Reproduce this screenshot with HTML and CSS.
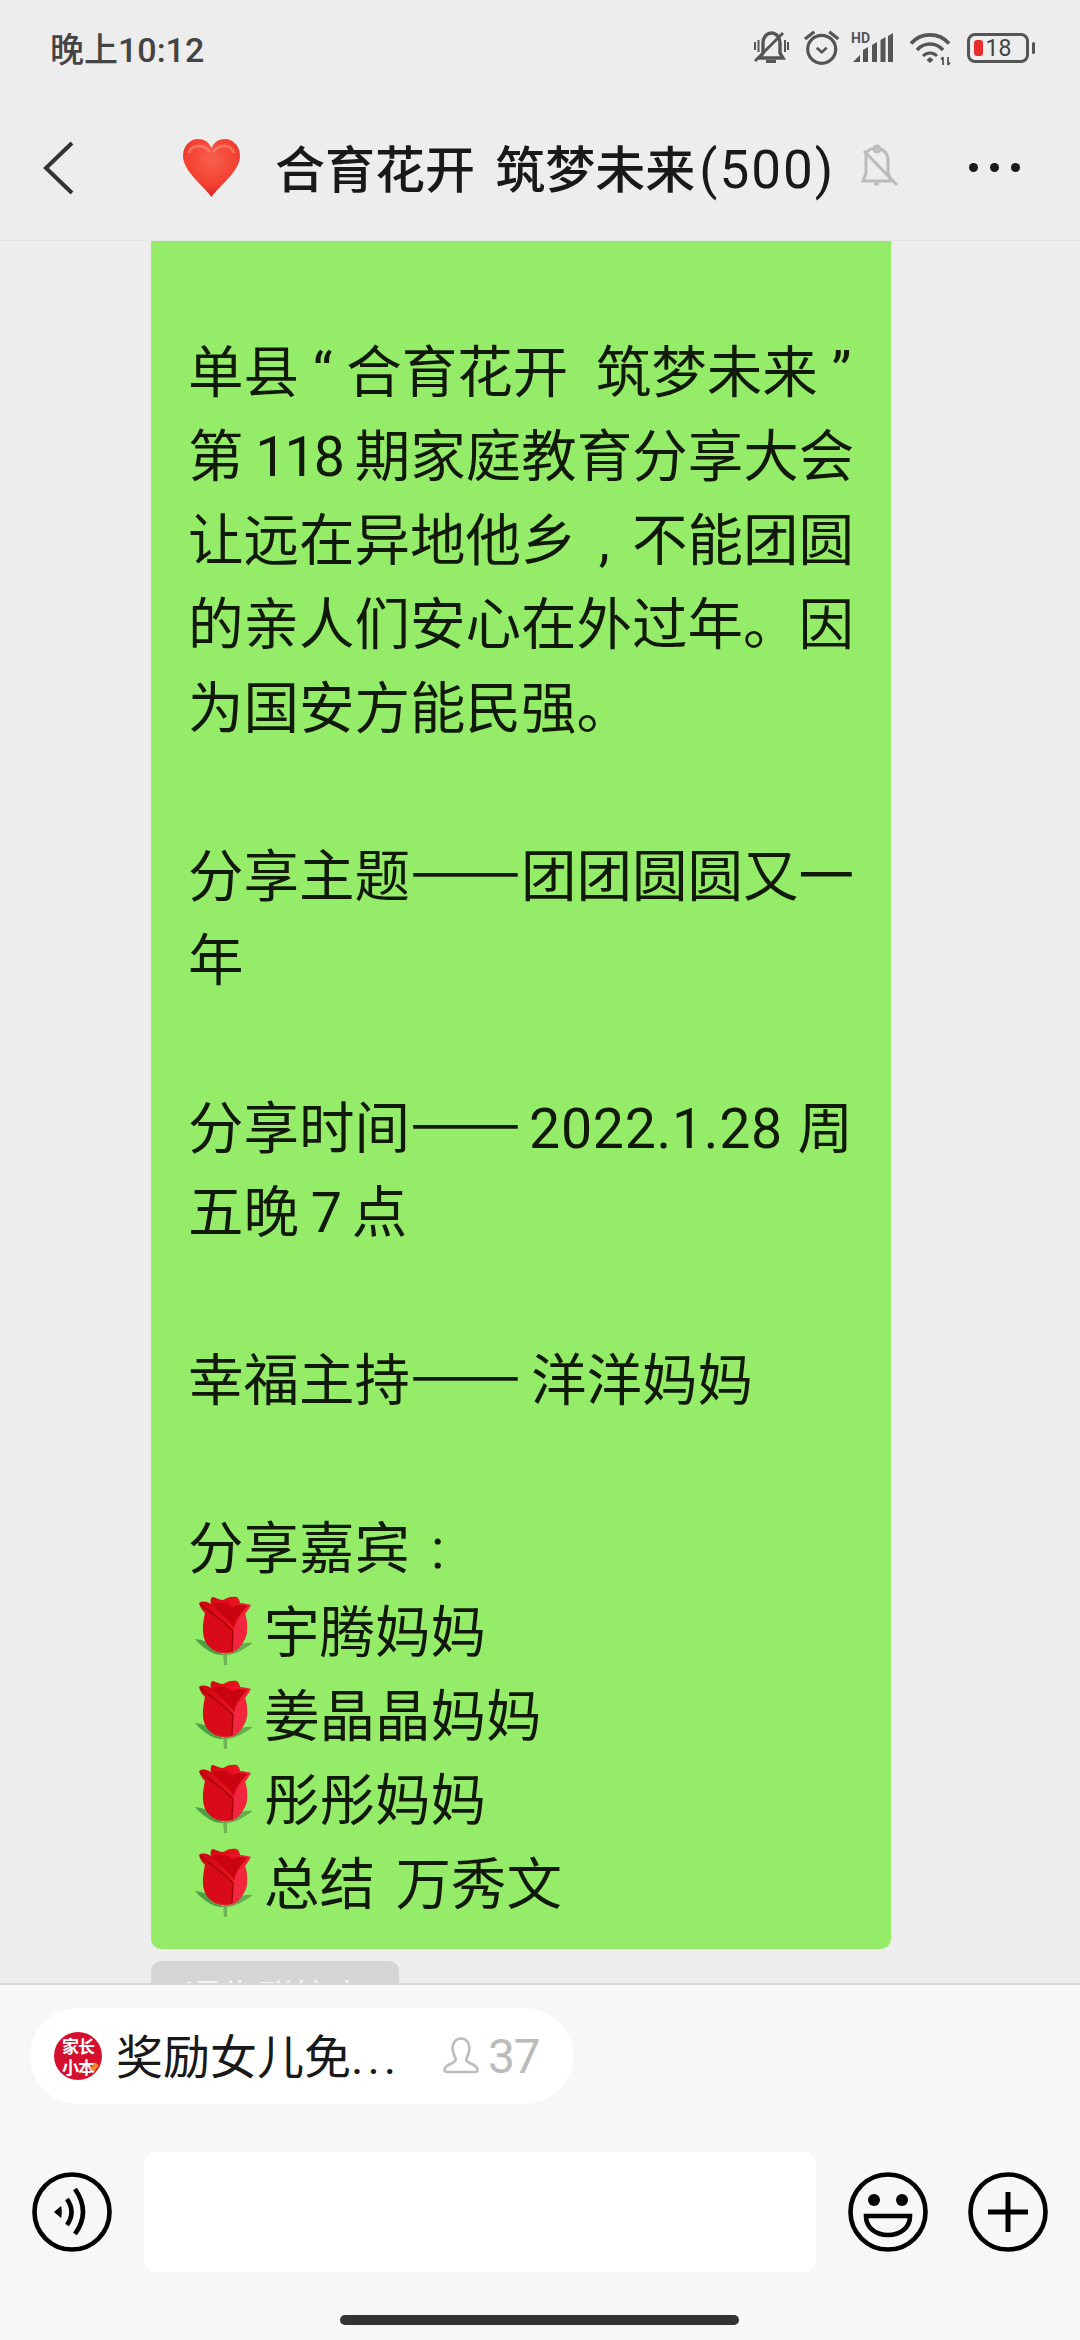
FILE: index.html
```html
<!DOCTYPE html>
<html lang="zh-CN">
<head>
    <meta charset="UTF-8">
    <meta name="viewport" content="width=device-width, initial-scale=1.0">
    <title>合育花开 筑梦未来</title>
    <link rel="stylesheet" href="styles.css">
</head>
<body>
    <!-- shared rose emoji -->
    <svg class="sprite" aria-hidden="true">
        <defs>
            <linearGradient id="roseHead" x1="0" y1="0" x2="1" y2="0.3">
                <stop offset="0" stop-color="#c8060f"/>
                <stop offset="0.6" stop-color="#e60f1c"/>
                <stop offset="1" stop-color="#f52a42"/>
            </linearGradient>
            <symbol id="rose" viewBox="0 0 70 80">
                <path d="M33 61 L34 74 L37 74 L37 61Z" fill="#6fb356"/>
                <path d="M5 48 C14 49 20 52 24 55 L34 64 C24 65 14 58 5 48Z" fill="#4f9f45"/>
                <path d="M63 52 C54 51 48 54 43 56 L33 64 C44 65 54 58 63 52Z" fill="#66ad4e"/>
                <path d="M9 12 C13 9 18 11 21 13 C20 9 21 6 23 6 C27 7 30 9 33 9 C38 6 42 5 47 6 C49 8 50 10 50 12 C54 12 58 13 61 14 C59 18 57 20 55 23 C58 32 58 42 55 48 C51 56 46 61 38 62 C30 63 22 60 17 53 C12 46 12 36 15 22 C12 19 10 16 9 12Z" fill="url(#roseHead)"/>
                <path d="M10 13 C18 20 34 30 43 40 L42 61 C30 62 20 58 16 50 C13 42 14 30 16 22Z" fill="#d90b18"/>
                <path d="M43 40 C46 30 50 25 55 22 C58 34 58 44 53 51 C50 57 46 60 42 62Z" fill="#f2263c"/>
                <path d="M22 14 C30 22 38 28 44 37 C46 28 50 22 58 15 C50 13 46 14 42 16 C38 12 30 10 22 14Z" fill="#c9040f"/>
                <path d="M10 13 C18 20 34 30 43 40 L42 60" fill="none" stroke="#a50009" stroke-width="1.4"/>
            </symbol>
        </defs>
    </svg>

    <div class="phone">
        <div class="status-bar">
            <span class="clock">晚上<span class="latin">10:12</span></span>
            <div class="status-icons">
                <svg class="ic-bell" viewBox="0 0 50 40" fill="none" stroke="#555" stroke-width="3.4">
                    <path d="M9 25 V15 a8.5 10 0 0 1 17 0 V25 l3 5 H6z"/>
                    <path d="M1 33 L29 5" stroke-width="3"/>
                    <path d="M1 14 V22 M4.500 12 V24 M31 12 V24 M34 14 V22" stroke-width="2"/>
                    <path d="M12 33.500 h10" stroke-width="3"/>
                </svg>
                <svg class="ic-alarm" viewBox="0 0 47 40" fill="none" stroke="#555" stroke-width="3.2">
                    <circle cx="17.700" cy="21.300" r="14"/>
                    <path d="M1 11 L10.300 3.700 M25.300 3.700 L34.300 11"/>
                    <path d="M12.700 19.700 L17.700 24.300 L22.700 19.700" stroke-width="2.600"/>
                </svg>
                <svg class="ic-signal" viewBox="0 0 58 40" fill="#555">
                    <text class="ic-hd" x="0" y="15">HD</text>
                    <path d="M2 34 L9 27 V34Z"/>
                    <path d="M12 34 V22 L17 19 V34Z"/>
                    <path d="M21 34 V17 L26 14 V34Z"/>
                    <path d="M29.500 34 V12 L34.500 9 V34Z"/>
                    <path d="M37 34 V8 L42 5 V34Z"/>
                </svg>
                <svg class="ic-wifi" viewBox="0 0 58 40" fill="none" stroke="#555" stroke-width="3.600">
                    <path d="M2 15.500 C12 4 30 4 40 15.500"/>
                    <path d="M8 22 C15 14 27 14 34 22"/>
                    <path d="M14 28 C18 24 24 24 28 28" stroke-width="3"/>
                    <path d="M17.500 32 L21 29 L24.500 32 L21 35Z" fill="#555" stroke="none"/>
                    <path d="M34 29 V37 M32 31.500 L34 29 M39 29 V37 M39 37 L41 34.500" stroke-width="1.800"/>
                </svg>
                <div class="battery">
                    <div class="battery-body">
                        <span class="battery-fill"></span>
                        <span class="battery-num">18</span>
                    </div>
                    <span class="battery-nub"></span>
                </div>
            </div>
        </div>

        <div class="nav-bar">
            <svg class="back" viewBox="0 0 40 56" fill="none" stroke="#333" stroke-width="4">
                <path d="M32 3 L6 28 L32 53"/>
            </svg>
            <svg class="heart" viewBox="0 0 57 58">
                <defs>
                    <radialGradient id="heartFill" cx="0.5" cy="0.35" r="0.65">
                        <stop offset="0" stop-color="#f8604e"/>
                        <stop offset="0.7" stop-color="#f33f30"/>
                        <stop offset="1" stop-color="#cf2a22"/>
                    </radialGradient>
                </defs>
                <path d="M28.500 58 C20 46 0 32 0 17 C0 6 8 0 15 0 C21 0 26 3 28.500 9 C31 3 36 0 42 0 C49 0 57 6 57 17 C57 32 37 46 28.500 58Z" fill="url(#heartFill)"/>
                <path d="M6 14 C8 6 20 4 27 13 M30 13 C36 4 49 6 51 14" fill="none" stroke="#fb8d7d" stroke-width="3" opacity="0.6"/>
            </svg>
            <h1 class="nav-title">合育花开 筑梦未来<span class="latin nav-count">(500)</span></h1>
            <svg class="nav-mute" viewBox="0 0 60 60" fill="none" stroke="#bbb" stroke-width="3">
                <path d="M21 19 C22 15 27 13 32 13 C38 14 43 18 43 26 V38 L46 46 H18 L21 38 V19"/>
                <circle cx="32" cy="14" r="3"/>
                <path d="M29 49 h5" stroke-width="3"/>
                <path d="M19 16 L52 50"/>
            </svg>
            <div class="more">
                <span></span>
                <span></span>
                <span></span>
            </div>
        </div>

        <div class="chat">
            <div class="bubble">
                <div class="row">单县<span class="latin"> “ </span>合育花开<span class="latin">  </span>筑梦未来<span class="latin"> ”</span></div>
                <div class="row">第<span class="latin tight"> 118 </span>期家庭教育分享大会</div>
                <div class="row">让远在异地他乡<span class="latin slot">,</span>不能团圆</div>
                <div class="row">的亲人们安心在外过年。因</div>
                <div class="row">为国安方能民强。</div>
                <div class="row"></div>
                <div class="row">分享主题<span class="dash">——</span>团团圆圆又一</div>
                <div class="row">年</div>
                <div class="row"></div>
                <div class="row">分享时间<span class="dash">——</span><span class="latin date">2022.1.28 </span>周</div>
                <div class="row">五晚<span class="latin tight"> 7 </span>点</div>
                <div class="row"></div>
                <div class="row">幸福主持<span class="dash dash-wide">——</span>洋洋妈妈</div>
                <div class="row"></div>
                <div class="row">分享嘉宾<span class="latin slot">:</span></div>
                <div class="row row-rose"><svg class="rose"><use href="#rose"/></svg>宇腾妈妈</div>
                <div class="row row-rose"><svg class="rose"><use href="#rose"/></svg>姜晶晶妈妈</div>
                <div class="row row-rose"><svg class="rose"><use href="#rose"/></svg>彤彤妈妈</div>
                <div class="row row-rose"><svg class="rose"><use href="#rose"/></svg>总结 万秀文</div>
            </div>
            <div class="notice">通告群校内</div>
        </div>

        <div class="panel">
            <div class="chip">
                <div class="chip-logo">家长<br>小本<span class="chip-logo-pen"></span></div>
                <span class="chip-text">奖励女儿免<span class="latin dots">...</span></span>
                <svg class="chip-person" viewBox="0 0 50 50" fill="none" stroke="#bbb" stroke-width="2.600">
                    <path d="M18 1.500 C12.500 1.500 9.500 6 9.500 11.500 C9.500 16 11.500 19 12.500 21 C13.500 23 11.500 25 8.500 26.500 C4.500 28 1.500 30 1.500 33 C1.500 35 2.500 35 4.500 35 H31.500 C33.500 35 34.500 35 34.500 33 C34.500 30 31.500 28 27.500 26.500 C24.500 25 22.500 23 23.500 21 C24.500 19 26.500 16 26.500 11.500 C26.500 6 23.500 1.500 18 1.500Z"/>
                </svg>
                <span class="chip-count latin">37</span>
            </div>

            <div class="input-row">
                <svg class="tool" viewBox="0 0 80 80" fill="none" stroke="#000" stroke-width="4.600">
                    <circle cx="40" cy="40" r="37.500"/>
                    <path d="M22 40 L29 34 C30 37 30 43 29 46Z" fill="#000" stroke="none"/>
                    <path d="M35 27 Q44 40 35 53"/>
                    <path d="M43 17 Q59 40 43 62"/>
                </svg>
                <div class="input-box"></div>
                <svg class="tool" viewBox="0 0 80 80" fill="none" stroke="#000" stroke-width="4.600">
                    <circle cx="40" cy="40" r="37.500"/>
                    <circle cx="26" cy="28" r="6" fill="#000" stroke="none"/>
                    <circle cx="54" cy="28" r="6" fill="#000" stroke="none"/>
                    <path d="M18 44 H62 C62 56 52 63 40 63 C28 63 18 56 18 44Z"/>
                </svg>
                <svg class="tool tool-plus" viewBox="0 0 80 80" fill="none" stroke="#000" stroke-width="4.600">
                    <circle cx="40" cy="40" r="37.500"/>
                    <path d="M20 40 H60 M40 20 V60" stroke-width="5"/>
                </svg>
            </div>

            <div class="home-bar"></div>
        </div>
    </div>
</body>
</html>
```

FILE: styles.css
```css
* {
    box-sizing: border-box;
}

html,
body {
    margin: 0;
    padding: 0;
}

body {
    font-family: "Noto Sans CJK SC", Roboto, sans-serif;
    color: #191919;
}

.sprite {
    display: block;
    width: 0;
    height: 0;
}

.latin {
    font-family: Roboto, "Noto Sans CJK SC", sans-serif;
}

.phone {
    width: 1080px;
    height: 2340px;
    display: flex;
    flex-direction: column;
    background-color: #ededed;
    overflow: hidden;
}

/* top status row */
.status-bar {
    height: 96px;
    flex: none;
    display: flex;
    align-items: center;
    justify-content: space-between;
    padding: 0 45px 2px 50px;
}

.clock {
    font-size: 34px;
    font-weight: 500;
    color: #444444;
}

.status-icons {
    display: flex;
    align-items: center;
    margin-bottom: -2px;
}

.status-icons svg {
    display: block;
    height: 40px;
}

.ic-bell {
    width: 50px;
}

.ic-alarm {
    width: 47px;
}

.ic-signal,
.ic-wifi {
    width: 58px;
}

.ic-hd {
    font-family: Roboto, sans-serif;
    font-size: 14px;
    font-weight: 700;
}

.battery {
    display: flex;
    align-items: center;
    gap: 3px;
}

.battery-body {
    width: 62px;
    height: 30px;
    border: 3.5px solid #555555;
    border-radius: 8px;
    display: flex;
    align-items: center;
    padding-left: 3.5px;
    gap: 3px;
}

.battery-fill {
    width: 9px;
    height: 16px;
    background-color: #e62e2e;
    border-radius: 3px;
}

.battery-num {
    font-family: Roboto, sans-serif;
    font-size: 23px;
    line-height: 23px;
    color: #444444;
}

.battery-nub {
    width: 3px;
    height: 12px;
    background-color: #555555;
    border-radius: 2px;
}

/* chat title row */
.nav-bar {
    height: 145px;
    flex: none;
    display: flex;
    align-items: center;
    padding-bottom: 1px;
    border-bottom: 1px solid #e4e4e4;
}

.back {
    width: 40px;
    height: 56px;
    margin-left: 40px;
}

.heart {
    width: 57px;
    height: 58px;
    margin-left: 103px;
}

.nav-title {
    width: 553px;
    margin: 0 0 0 35px;
    font-size: 50px;
    font-weight: 500;
    line-height: 70px;
    word-spacing: 9px;
    white-space: nowrap;
}

.nav-count {
    margin-left: 4px;
    font-size: 53px;
    font-weight: 400;
    letter-spacing: 2px;
}

.nav-mute {
    width: 60px;
    height: 60px;
    margin: 0 0 6px 17px;
}

.more {
    display: flex;
    gap: 12px;
    margin-left: auto;
    margin-right: 60px;
}

.more span {
    width: 9px;
    height: 9px;
    background-color: #191919;
    border-radius: 50%;
}

/* message list, cut off by the panel below it */
.chat {
    flex: 1;
    min-height: 0;
    overflow: hidden;
}

.bubble {
    width: 740px;
    margin-left: 151px;
    padding: 85px 37px 27px;
    background-color: #95ec69;
    border-radius: 0 0 10px 10px;
    font-size: 55.5px;
    color: #111a08;
}

.row {
    height: 84px;
    line-height: 84px;
    white-space: pre;
}

.tight {
    letter-spacing: -2px;
}

/* punctuation centred in a full character cell */
.slot {
    display: inline-block;
    width: 55.5px;
    text-align: center;
}

.dash {
    -webkit-text-stroke: 1.5px #111a08;
}

.dash-wide {
    margin-right: 10px;
}

.date {
    margin-left: 8px;
    letter-spacing: 0.7px;
}

.row-rose {
    display: flex;
    align-items: center;
    word-spacing: 8px;
}

.rose {
    width: 70px;
    height: 80px;
    flex: none;
    margin: 6px 4px 0 2px;
}

.notice {
    width: 248px;
    height: 60px;
    margin: 12px 0 0 151px;
    padding-top: 9px;
    background-color: #d5d5d5;
    border-radius: 10px;
    font-size: 36px;
    line-height: 50px;
    color: #f4f4f4;
    text-align: center;
}

/* bottom panel */
.panel {
    height: 357px;
    flex: none;
    background-color: #f7f7f7;
    border-top: 2px solid #d8d8d8;
}

.chip {
    width: 543px;
    height: 96px;
    margin: 23px 0 0 30px;
    padding-left: 24px;
    display: flex;
    align-items: center;
    background-color: #ffffff;
    border-radius: 48px;
}

.chip-logo {
    position: relative;
    width: 48px;
    height: 48px;
    flex: none;
    padding-top: 3px;
    background-color: #d5102f;
    border-radius: 50%;
    font-size: 17px;
    font-weight: 700;
    line-height: 21px;
    letter-spacing: -1px;
    color: #ffffff;
    text-align: center;
}

.chip-logo-pen {
    position: absolute;
    right: 5px;
    bottom: 9px;
    width: 5px;
    height: 8px;
    background-color: #ee8a2a;
    transform: rotate(35deg);
}

.chip-text {
    width: 280px;
    flex: none;
    margin-left: 14px;
    font-size: 47px;
    line-height: 64px;
    white-space: nowrap;
}

.dots {
    letter-spacing: 4px;
}

.chip-person {
    width: 50px;
    height: 50px;
    flex: none;
    margin: 12px 0 0 47px;
}

.chip-count {
    margin-left: -5px;
    font-size: 48px;
    letter-spacing: -1.5px;
    color: #bbbbbb;
}

.input-row {
    height: 120px;
    margin-top: 48px;
    padding-left: 32px;
    display: flex;
    align-items: center;
    gap: 32px;
}

.tool {
    width: 80px;
    height: 80px;
    flex: none;
}

.tool-plus {
    margin-left: 8px;
}

.input-box {
    width: 672px;
    height: 120px;
    background-color: #ffffff;
    border-radius: 12px;
}

.home-bar {
    width: 399px;
    height: 10px;
    margin: 43px 0 0 340px;
    background-color: #333333;
    border-radius: 5px;
}
```
